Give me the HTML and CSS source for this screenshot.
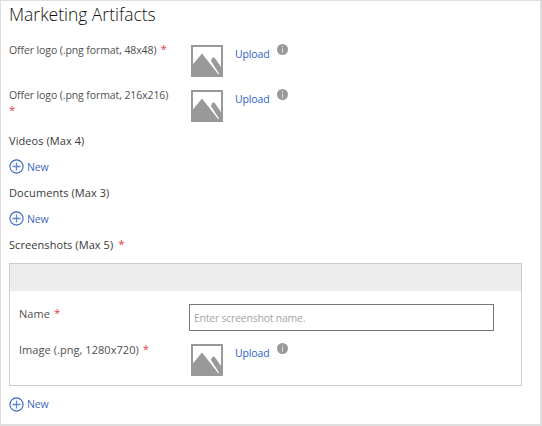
FILE: index.html
```html
<!DOCTYPE html>
<html lang="en">
<head>
<meta charset="utf-8">
<title>Marketing Artifacts</title>
<link rel="stylesheet" href="styles.css">
</head>
<body>
<svg class="defs" aria-hidden="true">
  <symbol id="picture" viewBox="0 0 32 32">
    <rect x="1" y="1" width="30" height="30" fill="#fff" stroke="#999" stroke-width="2"/>
    <path fill="#999" d="M1 20.500 11 8.500 18.500 18 27.500 29.500 28 28.500 20.500 17.500Q19.500 15.500 21 13.500T24.500 14L31 23.500V32H1Z"/>
    <path fill="#fff" d="M18 16.200 20.500 16.800 28 29.500Z"/>
  </symbol>
  <symbol id="info" viewBox="0 0 11 11">
    <circle cx="5.500" cy="5.500" r="5.500" fill="#999"/>
    <path fill="#d8d8d8" d="M5 2h1v1.200H5zM5 4.200h1V9H5z"/>
  </symbol>
  <symbol id="plus" viewBox="0 0 15 15">
    <circle cx="7.500" cy="7.500" r="6.600" fill="none" stroke="#3463c5" stroke-width="1.100"/>
    <path stroke="#5f86d2" stroke-width="1.300" d="M3.500 7.500h8M7.500 3.500v8"/>
  </symbol>
</svg>
<main class="panel">
  <h1>Marketing Artifacts</h1>
  <div class="row">
    <div class="label"><span>Offer logo (.png format, 48x48)</span> <b>*</b></div>
    <svg class="picture"><use href="#picture"/></svg>
    <a class="upload">Upload</a>
    <svg class="info"><use href="#info"/></svg>
  </div>
  <div class="row">
    <div class="label wrapped"><span>Offer logo (.png format, 216x216)</span><b>*</b></div>
    <svg class="picture"><use href="#picture"/></svg>
    <a class="upload">Upload</a>
    <svg class="info"><use href="#info"/></svg>
  </div>
  <h2>Videos (Max 4)</h2>
  <a class="new"><svg><use href="#plus"/></svg><span>New</span></a>
  <h2>Documents (Max 3)</h2>
  <a class="new"><svg><use href="#plus"/></svg><span>New</span></a>
  <h2><span>Screenshots (Max 5)</span> <b>*</b></h2>
  <section class="card">
    <div class="card-head"></div>
    <div class="name-row">
      <div class="label"><span>Name</span> <b>*</b></div>
      <div class="input"><span>Enter screenshot name.</span></div>
    </div>
    <div class="row">
      <div class="label"><span>Image (.png, 1280x720)</span> <b>*</b></div>
      <svg class="picture"><use href="#picture"/></svg>
      <a class="upload">Upload</a>
      <svg class="info"><use href="#info"/></svg>
    </div>
  </section>
  <a class="new last"><svg><use href="#plus"/></svg><span>New</span></a>
</main>
</body>
</html>
```
FILE: styles.css
```css
* { box-sizing: border-box; }
body { margin: 0; background: #fff; font-family: "Open Sans", "Noto Sans", sans-serif; font-size: 10.5px; color: #505050; }
.defs { position: absolute; width: 0; height: 0; }
.panel { width: 542px; height: 426px; padding-left: 8px; border: solid #dfdfdf; border-width: 1px 2px 2px 1px; overflow: hidden; }
h1 { margin: 0; height: 40px; font-size: 17.500px; font-weight: 300; line-height: 27px; color: #111; letter-spacing: -.02px; white-space: nowrap; }
h2 { display: flex; align-items: center; gap: 5px; margin: 0; height: 20px; padding-bottom: 2px; font-size: 11px; font-weight: 400; color: #383838; letter-spacing: .07px; white-space: nowrap; }
b { color: #e8384f; font-size: 11.5px; font-weight: 400; line-height: 10px; }
.row { display: flex; align-items: flex-start; height: 45px; }
.label { display: flex; gap: 4px; width: 182px; flex: none; line-height: 18px; letter-spacing: -.1px; white-space: nowrap; }
.label b { line-height: 15px; }
.wrapped { flex-direction: column; gap: 0; }
.wrapped span { line-height: 15px; padding-top: 2px; }
.wrapped b { line-height: 14px; }
.picture { width: 32px; height: 32px; flex: none; margin-top: 4px; }
.upload { width: 42px; margin-left: 12px; margin-top: 4px; line-height: 19px; color: #2b5fc7; letter-spacing: -.15px; }
.info { width: 11px; height: 11px; flex: none; margin-top: 3px; }
.new { display: flex; align-items: center; gap: 3px; height: 32px; padding-bottom: 1px; color: #3e68c1; letter-spacing: -.1px; }
.new svg { width: 15px; height: 15px; }
.card { width: 513px; height: 123px; margin-top: 8px; border: 1px solid #ccc; }
.card-head { height: 27px; background: #ededed; }
.name-row { display: flex; align-items: flex-start; height: 49px; padding: 13px 0 0 9px; }
.card .label { font-size: 11px; letter-spacing: .05px; padding-top: 1px; }
.name-row .label { width: 170px; }
.input { width: 305px; height: 27px; padding-left: 4px; border: 1px solid #777; line-height: 27px; color: #a5a5a5; letter-spacing: -.23px; }
.card .row { padding-left: 9px; }
.card .row .label { width: 172px; }
.last { height: 36px; padding: 0; }
```
